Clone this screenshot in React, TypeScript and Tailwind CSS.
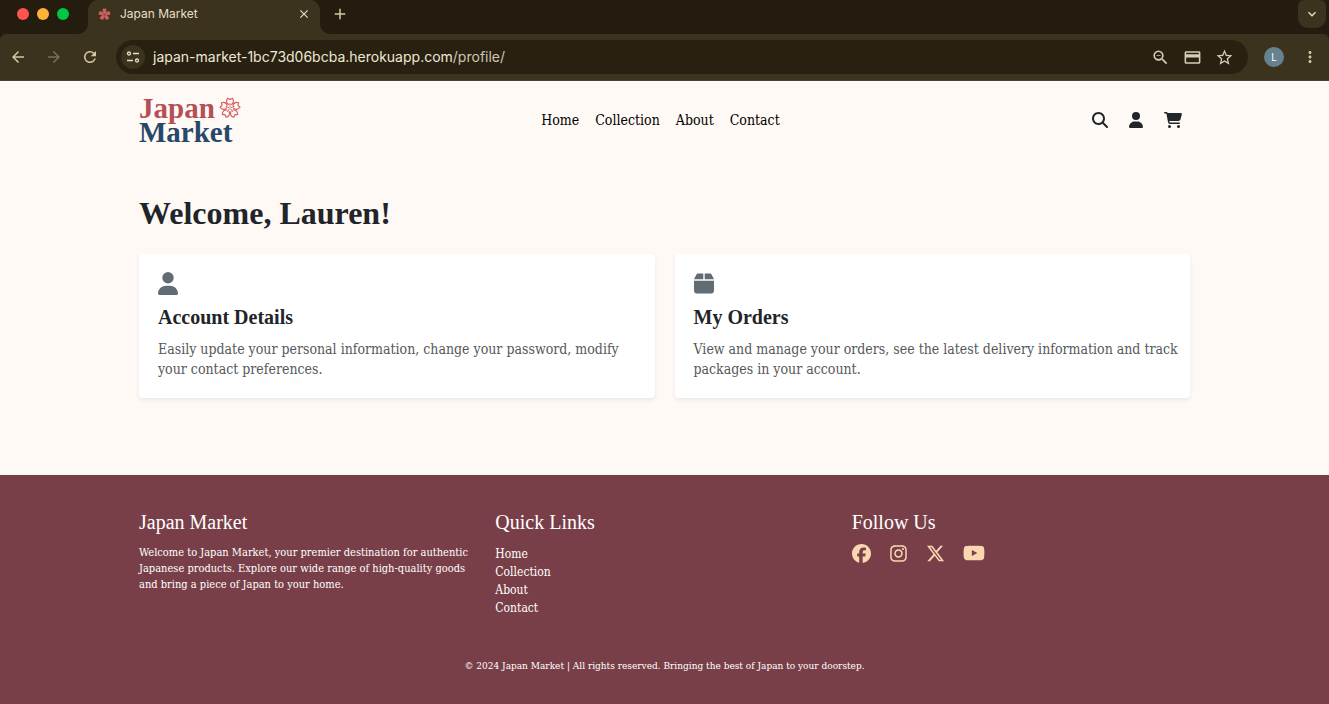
import type { ReactNode } from "react";
import {
  FaBox,
  FaCartShopping,
  FaFacebook,
  FaInstagram,
  FaMagnifyingGlass,
  FaUser,
  FaXTwitter,
  FaYoutube,
} from "react-icons/fa6";
import {
  MdArrowBack,
  MdArrowForward,
  MdClose,
  MdAdd,
  MdMoreVert,
  MdOutlineCreditCard,
  MdRefresh,
  MdStarOutline,
  MdZoomOut,
  MdKeyboardArrowDown,
} from "react-icons/md";

const links = ["Home", "Collection", "About", "Contact"];

const cards = [
  {
    title: "Account Details",
    text: "Easily update your personal information, change your password, modify your contact preferences.",
    icon: <FaUser className="h-[23px] w-5" />,
  },
  {
    title: "My Orders",
    text: "View and manage your orders, see the latest delivery information and track packages in your account.",
    icon: <FaBox className="h-[23px] w-5" />,
  },
];

const socials = [
  { name: "Facebook", icon: <FaFacebook className="size-[19px]" /> },
  { name: "Instagram", icon: <FaInstagram className="size-[19px]" /> },
  { name: "X", icon: <FaXTwitter className="size-[19px]" /> },
  { name: "YouTube", icon: <FaYoutube className="size-[22px]" /> },
];

function Blossom({ className, outline }: { className: string; outline?: boolean }) {
  return (
    <svg viewBox="-12 -12 24 24" className={className} aria-hidden="true">
      {[0, 72, 144, 216, 288].map((angle) => (
        <g key={angle} transform={`rotate(${angle})`}>
          {outline ? (
            <>
              <path
                d="M-1.300-3.600C-4-5-4.600-8-2.600-10.600L0-9.200 2.600-10.600C4.600-8 4-5 1.300-3.600"
                fill="none"
                stroke="currentColor"
                strokeWidth="1.300"
              />
              <path d="M0-.8V-4" stroke="currentColor" strokeWidth=".9" />
              <circle cy="-4.300" r=".8" fill="currentColor" />
            </>
          ) : (
            <path
              d="M0 0C-3-3-4.600-7-3-10.500Q-1.500-11.500 0-10.500Q1.500-11.500 3-10.500C4.600-7 3-3 0 0Z"
              fill="currentColor"
            />
          )}
        </g>
      ))}
      {!outline && <circle r="1.600" fill="#8d3b3a" />}
    </svg>
  );
}

function BarButton({ label, className, children }: { label: string; className: string; children: ReactNode }) {
  return (
    <button type="button" aria-label={label} className={`flex shrink-0 items-center justify-center ${className}`}>
      {children}
    </button>
  );
}

function BrowserBar() {
  return (
    <div className="bg-[#241c0f] font-['Inter',sans-serif] text-[#e6dfc8]">
      <div className="flex h-[34px]">
        <div className="flex w-[88px] items-center gap-2 pb-[6px] pl-[17px]">
          <span className="size-3 rounded-full bg-[#ff544d]" />
          <span className="size-3 rounded-full bg-[#fdb23a]" />
          <span className="size-3 rounded-full bg-[#00c645]" />
        </div>
        <div className="relative flex w-[232px] items-center rounded-t-[10px] bg-[#3b331e] pr-2 pb-[6px] pl-[10px]">
          <svg viewBox="0 0 10 10" className="absolute bottom-0 -left-[10px] size-[10px]" aria-hidden="true">
            <path d="M10 0V10H0A10 10 0 0 0 10 0Z" fill="#3b331e" />
          </svg>
          <svg viewBox="0 0 10 10" className="absolute -right-[10px] bottom-0 size-[10px]" aria-hidden="true">
            <path d="M0 0V10H10A10 10 0 0 1 0 0Z" fill="#3b331e" />
          </svg>
          <Blossom className="size-[13px] text-[#c9605f]" />
          <span className="grow pl-[9px] text-xs">Japan Market</span>
          <BarButton label="Close tab" className="size-4">
            <MdClose className="size-[14px]" />
          </BarButton>
        </div>
        <BarButton label="New tab" className="w-10 pb-[6px] text-[#d3c9a0]">
          <MdAdd className="size-[18px]" />
        </BarButton>
        <BarButton label="Search tabs" className="mr-[3px] ml-auto h-7 w-7 rounded-b-[10px] rounded-t-md bg-[#3b331e]">
          <MdKeyboardArrowDown className="size-4" />
        </BarButton>
      </div>
      <div className="flex h-[47px] items-center rounded-t-md border-b border-[#4a4034] bg-[#3b331e] text-[#d3c9a0]">
        <BarButton label="Back" className="w-9">
          <MdArrowBack className="size-[18px]" />
        </BarButton>
        <BarButton label="Forward" className="w-9 text-[#7a7058]">
          <MdArrowForward className="size-[18px]" />
        </BarButton>
        <BarButton label="Reload" className="w-9">
          <MdRefresh className="size-[18px]" />
        </BarButton>
        <div className="ml-2 flex h-[34px] grow items-center rounded-full bg-[#282011] px-[5px]">
          <BarButton label="Site information" className="size-6 rounded-full bg-[#3b331e]">
            <svg viewBox="0 0 14 14" className="size-[14px]" fill="none" stroke="#e6dfc8" strokeWidth="1.300" aria-hidden="true">
              <circle cx="3" cy="3.500" r="1.500" />
              <path d="M7 3.500H13M1 10.500H7" />
              <circle cx="11" cy="10.500" r="1.500" />
            </svg>
          </BarButton>
          <a href="#profile" className="grow pl-2 text-sm text-[#efe8d5]">
            japan-market-1bc73d06bcba.herokuapp.com<span className="text-[#cfc7b0]">/profile/</span>
          </a>
          <div className="flex text-[#d5cdb4]">
            <BarButton label="Zoom" className="w-8">
              <MdZoomOut className="size-[19px]" />
            </BarButton>
            <BarButton label="Payment methods" className="w-8">
              <MdOutlineCreditCard className="size-[19px]" />
            </BarButton>
            <BarButton label="Bookmark" className="mr-[3px] w-8">
              <MdStarOutline className="size-[19px]" />
            </BarButton>
          </div>
        </div>
        <BarButton label="User profile" className="mr-[17px] ml-4 size-5 rounded-full bg-[#66828f] text-[10px] text-white">
          L
        </BarButton>
        <BarButton label="More" className="mr-[10px] w-[18px]">
          <MdMoreVert className="size-5" />
        </BarButton>
      </div>
    </div>
  );
}

export default function App() {
  return (
    <div className="flex min-h-screen flex-col bg-[#fff9f5] font-['DejaVu_Serif_Condensed','DejaVu_Serif',serif] text-[#212529]">
      <BrowserBar />

      <header className="mx-auto flex h-20 w-full max-w-[1051px] items-center justify-between pb-[2px]">
        <a href="#home" aria-label="Japan Market" className="w-[120px] font-['Liberation_Serif',serif] text-[29px] leading-6 font-bold">
          <span className="flex items-center gap-1 text-[#b44f58]">
            Japan
            <Blossom outline className="size-[22px] text-[#d65f60]" />
          </span>
          <span className="block text-[#274868]">Market</span>
        </a>
        <nav className="flex gap-4 text-sm text-black">
          {links.map((link) => (
            <a key={link} href={`#${link}`}>{link}</a>
          ))}
        </nav>
        <div className="flex w-32 items-center justify-end gap-5 pr-2">
          <button type="button" aria-label="Search"><FaMagnifyingGlass className="size-4" /></button>
          <a href="#profile" aria-label="Profile"><FaUser className="h-4 w-4" /></a>
          <a href="#cart" aria-label="Cart"><FaCartShopping className="h-4 w-[18px]" /></a>
        </div>
      </header>

      <main className="mx-auto w-full max-w-[1051px] pt-8 pb-[77px]">
        <h1 className="font-['Liberation_Serif',serif] text-[32px] leading-10 font-bold">Welcome, Lauren!</h1>
        <div className="mt-[21px] grid grid-cols-2 gap-5">
          {cards.map((card) => (
            <a key={card.title} href={`#${card.title}`} className="rounded bg-white pt-[18px] pr-3 pb-[19px] pl-[19px] shadow-[0_2px_4px_rgba(0,0,0,0.075)]">
              <span className="block text-[#626c73]">{card.icon}</span>
              <h2 className="mt-[10px] font-['Liberation_Serif',serif] text-xl leading-6 font-bold">{card.title}</h2>
              <p className="mt-[10px] text-sm text-[#55585b]">{card.text}</p>
            </a>
          ))}
        </div>
      </main>

      <footer className="grow bg-[#793f49] pt-[35px] text-white">
        <div className="mx-auto grid w-full max-w-[1051px] grid-cols-3 gap-[18px]">
          <section>
            <h3 className="font-['Liberation_Serif',serif] text-xl leading-6">Japan Market</h3>
            <p className="mt-[11px] text-[11px] leading-4">
              Welcome to Japan Market, your premier destination for authentic Japanese products. Explore our wide range of high-quality goods and bring a piece of Japan to your home.
            </p>
          </section>
          <section>
            <h3 className="font-['Liberation_Serif',serif] text-xl leading-6">Quick Links</h3>
            <ul className="mt-[11px] text-xs leading-[18px]">
              {links.map((link) => (
                <li key={link}><a href={`#${link}`}>{link}</a></li>
              ))}
            </ul>
          </section>
          <section>
            <h3 className="font-['Liberation_Serif',serif] text-xl leading-6">Follow Us</h3>
            <div className="mt-2 flex items-center gap-[18px] text-[#fad7b0]">
              {socials.map((social) => (
                <a key={social.name} href={`#${social.name}`} aria-label={social.name}>{social.icon}</a>
              ))}
            </div>
          </section>
        </div>
        <p className="mt-[41px] text-center text-[10px]">
          © 2024 Japan Market | All rights reserved. Bringing the best of Japan to your doorstep.
        </p>
      </footer>
    </div>
  );
}
